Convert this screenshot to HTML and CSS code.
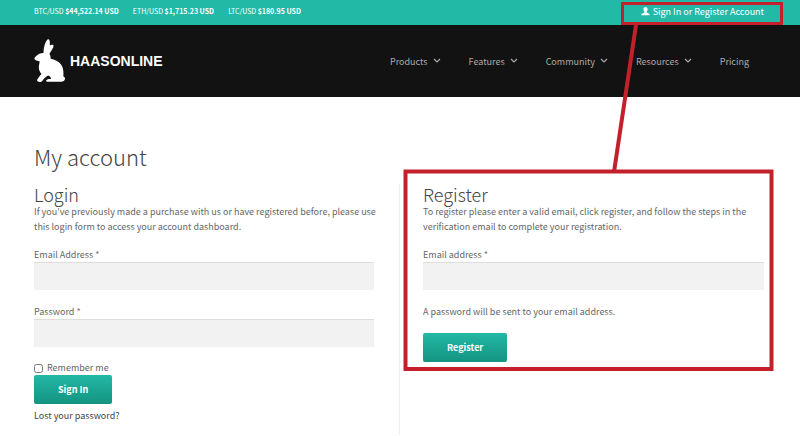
FILE: index.html
```html
<!DOCTYPE html>
<html lang="en">
<head>
<meta charset="utf-8">
<title>My account - HaasOnline</title>
<link rel="stylesheet" href="styles.css">
</head>
<body>
<div class="topbar">
  <ul class="ticker">
    <li>BTC/USD <b>$44,522.14 USD</b></li>
    <li>ETH/USD <b>$1,715.23 USD</b></li>
    <li>LTC/USD <b>$180.95 USD</b></li>
  </ul>
  <a class="signin" href="#login">
    <svg class="user" viewBox="0 0 9 9" aria-hidden="true"><path d="M4.500 0C5.900 0 6.700 1 6.600 2.400C6.500 3.600 6 4.300 5.600 4.800V5.600C7 6.200 8.800 6.500 8.800 8.300H.2C.2 6.500 2 6.200 3.400 5.600V4.800C3 4.300 2.500 3.600 2.400 2.400C2.300 1 3.100 0 4.500 0Z"/></svg>
    Sign In or Register Account
  </a>
</div>
<header class="header">
  <a class="logo" href="#">
    <svg class="rabbit" viewBox="0 0 32 44" aria-hidden="true"><path d="M13.500.6C14.900-.2 15.700 1 15.800 3C15.900 4.300 15.800 5.500 15.900 6.600C16.800 5.600 18.300 5.500 19.300 6C19.900 8.200 18.600 9.700 17.500 11.500C16.700 12.800 15.900 13.800 15.400 15C16.600 16.300 16.500 18 16.700 19.700C20.500 20.600 24.600 22.100 27 25.500C29.500 29 29.700 33.500 29.300 37.300C30.800 37.900 31.500 39.500 30.700 40.800C30 42.300 28.500 42.700 27 42.700H13.200C12 42.700 11.700 41.700 12.500 40.900C13.500 40 15.200 40 17 40C17 38.300 15.700 37 14.100 36.500C12.100 37.500 9.700 39.500 8.400 41.800C7.400 43.400 4.600 43.300 3.300 42.100C2.500 41 4 39.700 4.600 38.600C5.500 37 6.500 35.900 7.600 35C5.700 33 4.500 30.300 4.900 27.300C5.100 25.300 5.600 23.800 5.600 22.200C3.800 22 1.200 21.500.5 20C.2 18.800 1.500 17.800 2.500 16.800C4 15.100 6.500 14.200 9.500 14C9.700 9.500 10.700 3.200 13.500.6Z"/></svg>
    <span>HAASONLINE</span>
  </a>
  <nav class="nav">
    <a href="#">Products <svg viewBox="0 0 8 6" aria-hidden="true"><path d="M1 1l3 3 3-3"/></svg></a>
    <a href="#">Features <svg viewBox="0 0 8 6" aria-hidden="true"><path d="M1 1l3 3 3-3"/></svg></a>
    <a href="#">Community <svg viewBox="0 0 8 6" aria-hidden="true"><path d="M1 1l3 3 3-3"/></svg></a>
    <a href="#">Resources <svg viewBox="0 0 8 6" aria-hidden="true"><path d="M1 1l3 3 3-3"/></svg></a>
    <a href="#">Pricing</a>
  </nav>
</header>
<main class="main">
  <h1>My account</h1>
  <div class="columns">
    <form class="panel" id="login">
      <h2>Login</h2>
      <p class="intro">If you've previously made a purchase with us or have registered before, please use this login form to access your account dashboard.</p>
      <div class="field">
        <label for="user">Email Address <i>*</i></label>
        <input type="text" id="user">
      </div>
      <div class="field">
        <label for="pass">Password <i>*</i></label>
        <input type="password" id="pass">
      </div>
      <label class="remember"><input type="checkbox"> Remember me</label>
      <button type="button">Sign In</button>
      <a class="lost" href="#">Lost your password?</a>
    </form>
    <form class="panel">
      <h2>Register</h2>
      <p class="intro">To register please enter a valid email, click register, and follow the steps in the verification email to complete your registration.</p>
      <div class="field">
        <label for="mail">Email address <i>*</i></label>
        <input type="email" id="mail">
      </div>
      <p>A password will be sent to your email address.</p>
      <button type="button">Register</button>
    </form>
  </div>
</main>
<svg class="callout" viewBox="0 0 800 436" aria-hidden="true">
  <rect x="622.500" y="3.500" width="159" height="20" stroke-width="3"/>
  <path d="M636 25L614 172" stroke-width="4"/>
  <rect x="405.500" y="171.500" width="366" height="197.500" stroke-width="4"/>
</svg>
</body>
</html>
```
FILE: styles.css
```css
* { box-sizing: border-box; }
body {
  margin: 0;
  position: relative;
  background: #fff;
  color: #666;
  font: 9px/15px "Noto Sans CJK SC", "Open Sans", sans-serif;
}
a { color: inherit; text-decoration: none; }
.topbar {
  display: flex;
  justify-content: space-between;
  height: 25px;
  padding: 4px 36px 0 34px;
  background: #23b9a7;
  color: #fff;
}
.ticker {
  display: flex;
  gap: 14px;
  margin: 0;
  padding: 0;
  list-style: none;
  font-size: 7px;
}
.ticker b { font-weight: 700; }
.signin { display: flex; gap: 3px; }
.user { width: 9px; height: 9px; margin-top: 3px; fill: #fff; }
.header {
  display: flex;
  align-items: center;
  justify-content: space-between;
  height: 72px;
  padding: 0 51px 0 34px;
  background: #121212;
  color: #aaa;
}
.logo {
  display: flex;
  align-items: center;
  gap: 4px;
  color: #fff;
  font: bold 14px/16px "Liberation Sans", Arial, sans-serif;
}
.rabbit { width: 32px; height: 44px; fill: #fff; }
.nav { display: flex; gap: 28px; }
.nav a { display: flex; align-items: center; gap: 5px; }
.nav svg { width: 8px; height: 6px; fill: none; stroke: #aaa; stroke-width: 1.2; }
.main { padding: 44px 36px 0 34px; }
h1, h2 { margin: 0; color: #444; font-weight: 300; }
h1 { font-size: 22px; line-height: 30px; }
h2 { font-size: 18px; line-height: 20px; }
.columns { display: grid; grid-template-columns: 1fr 1fr; margin-top: 13px; }
.panel { display: flex; flex-direction: column; align-items: flex-start; min-height: 251px; }
.panel:first-child { padding-right: 25px; }
.panel:last-child { padding-left: 23px; border-left: 1px solid #eee; }
p { margin: 0 0 14px; }
/* The intro runs slightly into the column gutter. */
.intro { margin: 0 -8px 13px 0; }
.field { display: flex; flex-direction: column; align-self: stretch; margin-bottom: 14px; }
.field i { color: #777; font-style: normal; }
.field input {
  width: 100%;
  height: 28px;
  padding: 0 8px;
  border: 0;
  border-top: 1px solid #ddd;
  background: #f2f2f2;
}
.remember { display: flex; align-items: center; gap: 4px; line-height: 14px; }
.remember input { width: 9px; height: 9px; margin: 0; }
button {
  height: 29px;
  padding: 0 24px;
  border: 0;
  border-radius: 2px;
  background: linear-gradient(#22b8a5, #149481);
  color: #fff;
  font: 700 9px/15px "Noto Sans CJK SC", "Open Sans", sans-serif;
}
.lost { margin-top: 4px; color: #444; }
.callout {
  position: absolute;
  top: 0;
  left: 0;
  width: 800px;
  height: 436px;
  fill: none;
  stroke: #c4202c;
  pointer-events: none;
}
```
